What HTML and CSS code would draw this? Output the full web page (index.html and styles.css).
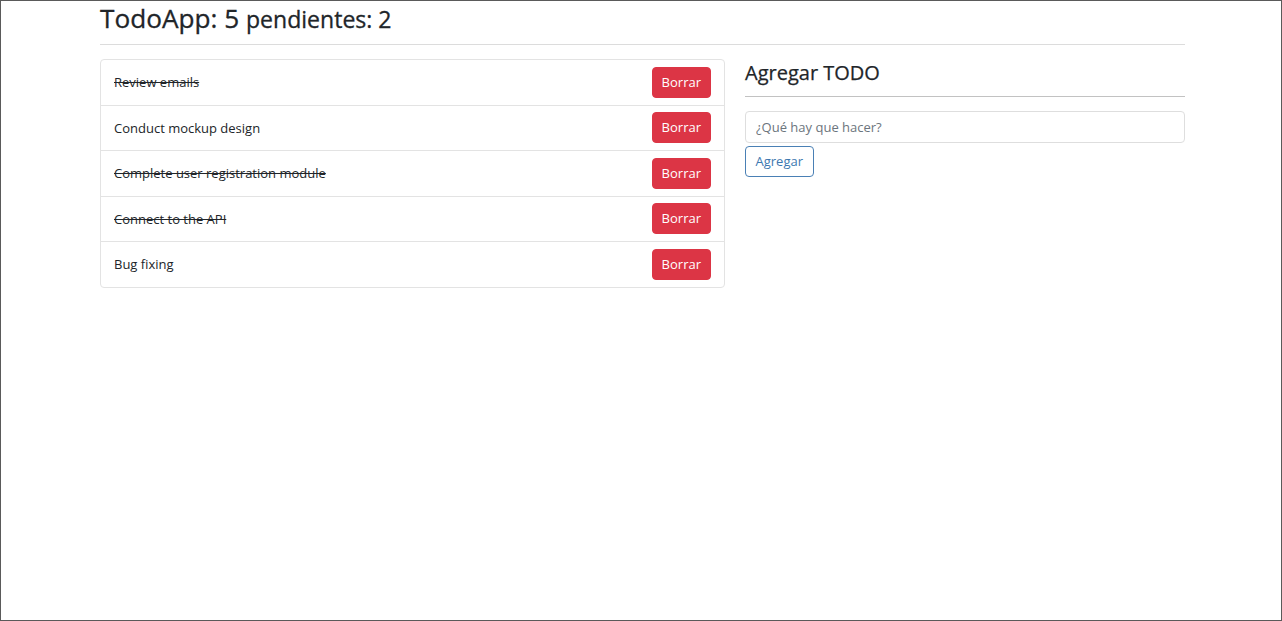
FILE: index.html
```html
<!DOCTYPE html>
<html lang="es">
<head>
<meta charset="utf-8">
<title>TodoApp</title>
<link rel="stylesheet" href="styles.css">
</head>
<body>
<div class="frame">
  <div class="container">
    <h1 class="title">TodoApp: 5 <small>pendientes: 2</small></h1>
    <hr class="rule-light">
    <div class="row">
      <div class="col-list">
        <ul class="list-group">
          <li class="list-item"><span class="done">Review emails</span><button class="btn btn-danger">Borrar</button></li>
          <li class="list-item"><span>Conduct mockup design</span><button class="btn btn-danger">Borrar</button></li>
          <li class="list-item"><span class="done">Complete user registration module</span><button class="btn btn-danger">Borrar</button></li>
          <li class="list-item"><span class="done">Connect to the API</span><button class="btn btn-danger">Borrar</button></li>
          <li class="list-item"><span>Bug fixing</span><button class="btn btn-danger">Borrar</button></li>
        </ul>
      </div>
      <div class="col-form">
        <h4 class="form-title">Agregar TODO</h4>
        <hr class="rule-dark">
        <form class="add-form">
          <input class="form-control" type="text" placeholder="¿Qué hay que hacer?">
          <button type="button" class="btn btn-outline">Agregar</button>
        </form>
      </div>
    </div>
  </div>
</div>
</body>
</html>
```

FILE: styles.css
```css
* { box-sizing: border-box; }
html, body { margin: 0; padding: 0; background: #fff; }
body {
  font-family: "Open Sans", "Noto Sans", sans-serif;
  color: #212529;
}
.frame {
  width: 1282px;
  height: 621px;
  border: 1px solid #5a5a5a;
  overflow: hidden;
}
.container {
  width: 1085px;
  margin-left: 99px;
}
.title {
  margin: 0;
  font-size: 26.2px;
  font-weight: 500;
  line-height: 34px;
  color: #212529;
  -webkit-text-stroke: 0.3px #212529;
}
.title small {
  font-size: 88%;
  font-weight: 500;
  line-height: 1;
}
hr { border: 0; margin: 0; }
.rule-light {
  border-top: 1px solid #dcdcdc;
  margin-top: 9px;
  margin-bottom: 14px;
}
.row {
  display: flex;
  gap: 20px;
  align-items: flex-start;
}
.col-list { width: 625px; }
.col-form { width: 440px; }
.list-group {
  list-style: none;
  margin: 0;
  padding: 0;
  border: 1px solid #e3e3e3;
  border-radius: 4px;
}
.list-item {
  display: flex;
  align-items: center;
  justify-content: space-between;
  padding: 6.5px 13px 7px;
  border-bottom: 1px solid #e3e3e3;
  font-size: 13px;
}
.list-item:last-child { border-bottom: 0; }
.done { text-decoration: line-through; }
.btn {
  font-family: inherit;
  font-size: 13px;
  height: 31px;
  line-height: 29px;
  padding: 0 9px;
  border-radius: 4px;
  border: 1px solid transparent;
  cursor: pointer;
}
.btn-danger {
  background: #dc3545;
  border-color: #dc3545;
  color: #fff;
}
.form-title {
  margin: 0;
  font-size: 20px;
  font-weight: 500;
  line-height: 27px;
  -webkit-text-stroke: 0.25px #212529;
}
.rule-dark {
  border-top: 1px solid #c2c2c2;
  margin-top: 10px;
  margin-bottom: 14px;
}
.add-form { margin: 0; }
.form-control {
  display: block;
  width: 100%;
  height: 32px;
  padding: 0 10px;
  font-family: inherit;
  font-size: 13px;
  color: #495057;
  border: 1px solid #dedede;
  border-radius: 4px;
  margin-bottom: 3px;
}
.form-control::placeholder { color: #6c757d; }
.btn-outline {
  background: #fff;
  color: #3d78b0;
  border-color: #4a80b5;
  padding: 0 9.5px;
}
```
